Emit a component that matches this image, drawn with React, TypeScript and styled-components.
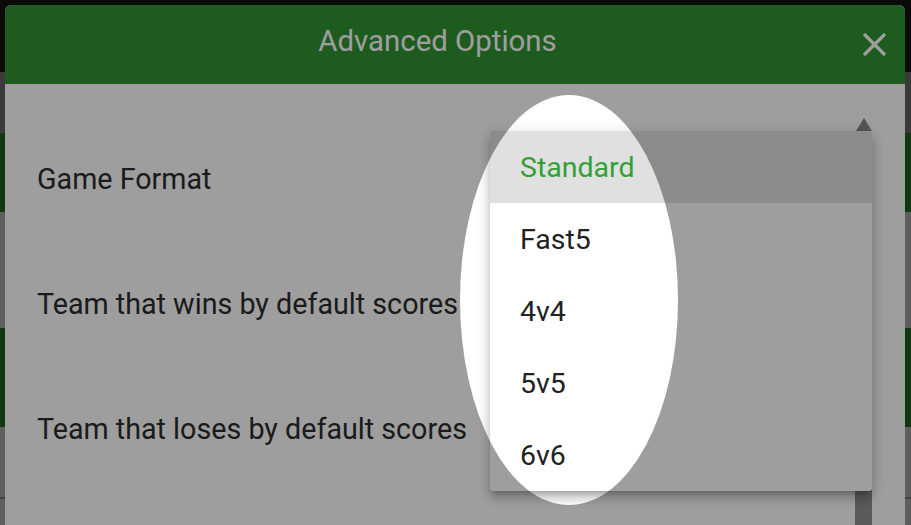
import React from "react";
import styled, { createGlobalStyle } from "styled-components";

const GlobalStyle = createGlobalStyle`
  html, body {
    margin: 0;
    padding: 0;
    background: #191919;
    font-family: Roboto, "Liberation Sans", Arial, sans-serif;
  }
`;

const Stage = styled.div`
  position: relative;
  width: 911px;
  height: 525px;
  overflow: hidden;
`;

// page that sits behind the dialog
const Page = styled.div`
  display: flex;
  flex-direction: column;
  height: 100%;
  background: #dbdbdb;
`;

const Band = styled.div<{ $h: number; $bg: string }>`
  height: ${(p) => p.$h}px;
  flex-shrink: 0;
  background: ${(p) => p.$bg};
`;

const Backdrop = styled.div`
  position: absolute;
  inset: 0;
  background: rgba(0, 0, 0, 0.3);
`;

const Modal = styled.div`
  position: absolute;
  left: 5px;
  top: 5px;
  width: 900px;
  bottom: -40px;
  display: flex;
  flex-direction: column;
  background: #fff;
  border-radius: 6px 6px 0 0;
  overflow: hidden;
`;

const Header = styled.div`
  position: relative;
  height: 79px;
  flex-shrink: 0;
  display: flex;
  align-items: center;
  justify-content: center;
  padding-right: 35px;
  background: #309432;
`;

const Title = styled.div`
  color: #fff;
  font-size: 29.4px;
  font-weight: 400;
  margin-top: -8px;
`;

const CloseButton = styled.button`
  position: absolute;
  right: 18px;
  top: 27px;
  width: 25px;
  height: 25px;
  padding: 0;
  border: none;
  background: none;
  display: flex;
`;

const Body = styled.div`
  flex: 1;
  display: flex;
  padding-right: 33px;
`;

const Content = styled.div`
  flex: 1;
  padding: 32px 0 0 32px;
`;

const Row = styled.div`
  height: 125px;
  display: flex;
  align-items: center;
`;

const Label = styled.div`
  font-size: 28.7px;
  color: #2d2d2d;
`;

const ScrollTrack = styled.div`
  width: 17px;
  display: flex;
  flex-direction: column;
  padding-top: 34px;
`;

const ScrollArrow = styled.div`
  width: 0;
  height: 0;
  margin: 0 auto;
  border-left: 8px solid transparent;
  border-right: 8px solid transparent;
  border-bottom: 13px solid #8a8a8a;
`;

const ScrollThumb = styled.div`
  margin-top: 359px;
  flex: 1;
  background: #929292;
`;

const Menu = styled.ul`
  position: absolute;
  left: 490px;
  top: 131px;
  width: 382px;
  margin: 0;
  padding: 0;
  list-style: none;
  background: #fff;
  border-radius: 4px;
  overflow: hidden;
  box-shadow: 0 5px 5px -3px rgba(0, 0, 0, 0.2), 0 8px 10px 1px rgba(0, 0, 0, 0.14),
    0 3px 14px 2px rgba(0, 0, 0, 0.12);
`;

const Item = styled.li<{ $selected?: boolean }>`
  height: 72px;
  display: flex;
  align-items: center;
  padding-left: 30px;
  font-size: 28.5px;
  color: ${(p) => (p.$selected ? "#33a037" : "#222")};
  background: ${(p) => (p.$selected ? "#e0e0e0" : "#fff")};
`;

// tutorial spotlight: dims everything outside the ellipse
const Spotlight = styled.div`
  position: absolute;
  left: 460px;
  top: 95px;
  width: 218px;
  height: 410px;
  border-radius: 50%;
  box-shadow: 0 0 0 2000px rgba(0, 0, 0, 0.38);
  pointer-events: none;
`;

const labels = [
  "Game Format",
  "Team that wins by default scores",
  "Team that loses by default scores",
];

const formats = ["Standard", "Fast5", "4v4", "5v5", "6v6"];

const App = () => {
  return (
    <>
      <GlobalStyle />
      <Stage>
        <Page>
          <Band $h={72} $bg="#191919" />
          <Band $h={61} $bg="#878787" />
          <Band $h={79} $bg="#298629" />
          <Band $h={116} $bg="#dbdbdb" />
          <Band $h={99} $bg="#298629" />
          <Band $h={70} $bg="#dbdbdb" />
          <Band $h={2} $bg="#9a9a9a" />
          <Band $h={26} $bg="#dbdbdb" />
        </Page>
        <Backdrop />
        <Modal>
          <Header>
            <Title>Advanced Options</Title>
            <CloseButton aria-label="close">
              <svg width="25" height="25" viewBox="0 0 25 25">
                <path d="M2 2L23 23M23 2L2 23" stroke="#fff" strokeWidth="3.2" />
              </svg>
            </CloseButton>
          </Header>
          <Body>
            <Content>
              {labels.map((l) => (
                <Row key={l}>
                  <Label>{l}</Label>
                </Row>
              ))}
            </Content>
            <ScrollTrack>
              <ScrollArrow />
              <ScrollThumb />
            </ScrollTrack>
          </Body>
        </Modal>
        <Menu>
          {formats.map((f, i) => (
            <Item key={f} $selected={i === 0}>
              {f}
            </Item>
          ))}
        </Menu>
        <Spotlight />
      </Stage>
    </>
  );
};

export default App;
